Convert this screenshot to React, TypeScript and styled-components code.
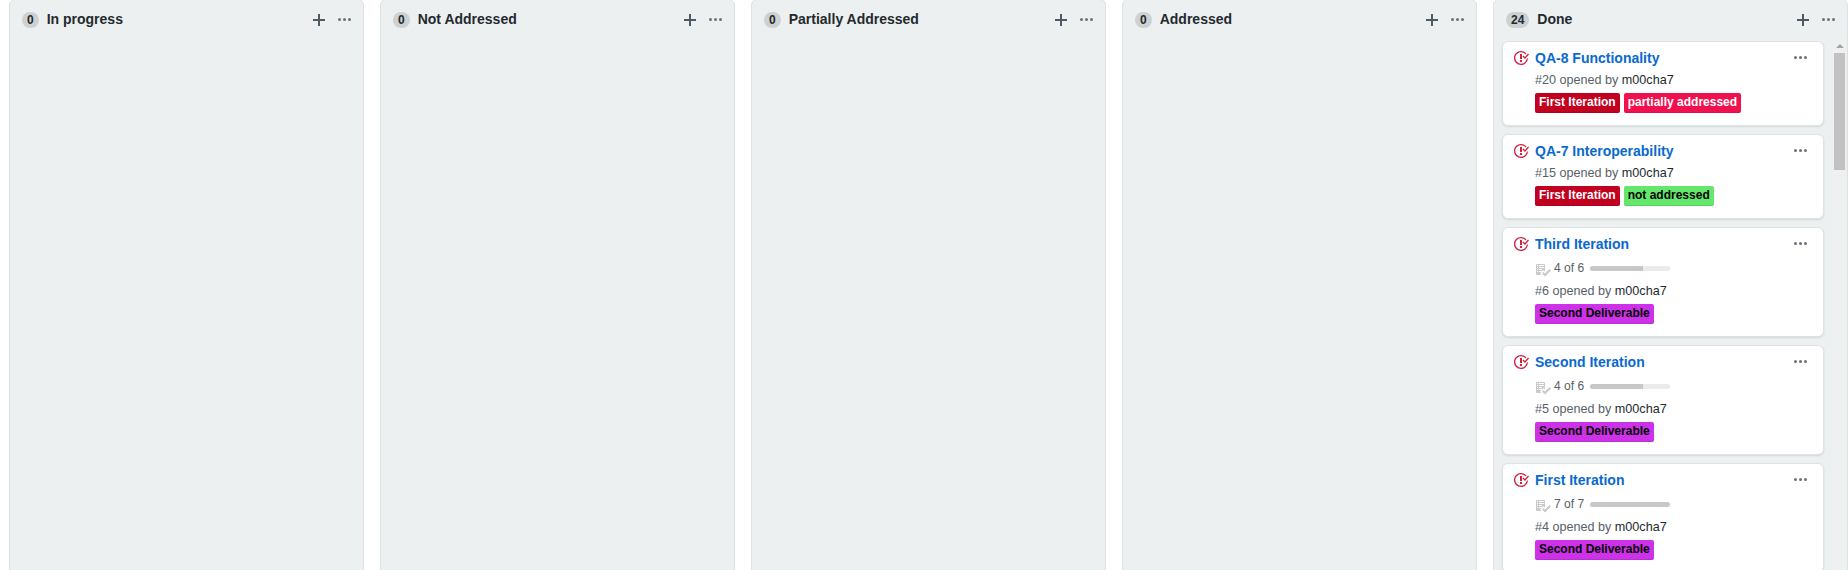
import React from "react";
import styled, { createGlobalStyle } from "styled-components";

const GlobalStyle = createGlobalStyle`
  *, *::before, *::after { box-sizing: border-box; }
  html, body { margin: 0; height: 570px; overflow: hidden; background: #fff; }
  body {
    font-family: "Liberation Sans", Arial, sans-serif;
    font-size: 14px;
    line-height: 21px;
    color: #24292e;
  }
`;

const Board = styled.main`
  display: flex;
  gap: 16px;
  width: 1848px;
  height: 570px;
  padding-left: 9px;
  overflow: hidden;
`;

const ColumnFrame = styled.section`
  display: flex;
  flex-direction: column;
  flex: 0 0 355px;
  height: 590px;
  background: #ecf0f1;
  border: 1px solid #dfe2e5;
  border-radius: 6px;
  margin-top: -1px;
`;

const ColumnHeader = styled.header`
  display: flex;
  align-items: flex-start;
  height: 41px;
  padding: 9px 12px 0;
`;

const Counter = styled.span`
  height: 16px;
  margin-top: 3px;
  padding: 0 5px;
  border-radius: 20px;
  background: #cdd1d2;
  font-size: 12px;
  font-weight: 700;
  line-height: 16px;
`;

const ColumnTitle = styled.h3`
  flex: 1;
  margin: 0 0 0 8px;
  font-size: 14px;
  font-weight: 700;
  line-height: 21px;
`;

const IconButton = styled.button<{ $gap?: number; $top?: number; $muted?: boolean }>`
  display: block;
  margin: ${({ $top = 3 }) => $top}px 0 0 ${({ $gap = 0 }) => $gap}px;
  padding: 0;
  border: 0;
  background: none;
  color: ${({ $muted }) => ($muted ? "#68727b" : "#4f5961")};
  line-height: 0;
`;

const Icon = styled.svg`
  display: block;
  fill: currentColor;
`;

const ColumnBody = styled.div`
  display: flex;
  flex: 1;
  min-height: 0;
  overflow: hidden;
`;

const CardList = styled.div`
  flex: 1;
  padding: 0 9px 0 8px;
`;

const CardFrame = styled.article`
  display: flex;
  align-items: flex-start;
  margin-bottom: 8px;
  padding: 6px 16px 12px 10px;
  background: #fff;
  border: 1px solid #dfe2e5;
  border-radius: 6px;
  box-shadow: 0 1px 2px rgba(27, 31, 35, 0.12);
`;

const ClosedIcon = styled(Icon)`
  flex: none;
  margin: 2px 6px 0 0;
  color: #d41f3f;
`;

const CardContent = styled.div`
  flex: 1;
`;

const CardTitle = styled.a`
  display: block;
  color: #0969d0;
  font-weight: 700;
  line-height: 21px;
`;

const Meta = styled.div`
  padding-top: 2px;
  color: #586069;
  font-size: 12.6px;
  line-height: 18px;
`;

const Author = styled.a`
  color: #24292e;
`;

const TaskProgress = styled.div`
  display: flex;
  align-items: center;
  height: 25px;
  color: #586069;
  font-size: 12px;
  line-height: 18px;
`;

const TaskIcon = styled(Icon)`
  margin: 5px 3px 0 0;
  color: #cacaca;
`;

const ProgressTrack = styled.span`
  display: block;
  width: 80px;
  height: 5px;
  margin: 2px 0 0 6px;
  overflow: hidden;
  border-radius: 3px;
  background: #ebebeb;
`;

const ProgressFill = styled.span`
  display: block;
  height: 100%;
  background: #c8c8c8;
`;

const Labels = styled.div`
  display: flex;
  gap: 4px;
  margin-top: 4px;
`;

const Label = styled.span<{ $bg: string; $fg: string }>`
  height: 20px;
  padding: 0 4px;
  border-radius: 2px;
  box-shadow: inset 0 -1px 0 rgba(27, 31, 35, 0.12);
  background: ${({ $bg }) => $bg};
  color: ${({ $fg }) => $fg};
  font-size: 12px;
  font-weight: 700;
  line-height: 18px;
`;

const Scrollbar = styled.div`
  display: flex;
  flex-direction: column;
  align-items: center;
  width: 13px;
  margin-right: 1px;
  background: #eff1f1;
`;

const ScrollArrow = styled.span`
  margin: 3px 0 5px;
  border: 4px solid transparent;
  border-top: 0;
  border-bottom: 4px solid #a3a3a3;
`;

const ScrollThumb = styled.span`
  width: 11px;
  height: 117px;
  background: #c1c2c1;
`;

const PlusIcon = () => (
  <Icon width="12" height="16" viewBox="0 0 12 16">
    <path d="M12 9H7v5H5V9H0V7h5V2h2v5h5v2z" />
  </Icon>
);

const KebabIcon = () => (
  <Icon width="13" height="16" viewBox="0 0 13 16">
    <path d="M1.5 9a1.5 1.5 0 100-3 1.5 1.5 0 000 3zm5 0a1.5 1.5 0 100-3 1.5 1.5 0 000 3zM13 7.5a1.5 1.5 0 11-3 0 1.5 1.5 0 013 0z" />
  </Icon>
);

interface CardData {
  title: string;
  number: number;
  tasks?: [number, number];
  labels: LabelData[];
}

interface LabelData {
  text: string;
  bg: string;
  fg: string;
}

const firstIteration: LabelData = { text: "First Iteration", bg: "#c2001f", fg: "#fff" };
const partially: LabelData = { text: "partially addressed", bg: "#f2114f", fg: "#fff" };
const notAddressed: LabelData = { text: "not addressed", bg: "#64e86b", fg: "#000" };
const secondDeliverable: LabelData = { text: "Second Deliverable", bg: "#cd32e8", fg: "#000" };

const doneCards: CardData[] = [
  { title: "QA-8 Functionality", number: 20, labels: [firstIteration, partially] },
  { title: "QA-7 Interoperability", number: 15, labels: [firstIteration, notAddressed] },
  { title: "Third Iteration", number: 6, tasks: [4, 6], labels: [secondDeliverable] },
  { title: "Second Iteration", number: 5, tasks: [4, 6], labels: [secondDeliverable] },
  { title: "First Iteration", number: 4, tasks: [7, 7], labels: [secondDeliverable] },
];

const columns: { name: string; count: number; cards?: CardData[] }[] = [
  { name: "In progress", count: 0 },
  { name: "Not Addressed", count: 0 },
  { name: "Partially Addressed", count: 0 },
  { name: "Addressed", count: 0 },
  { name: "Done", count: 24, cards: doneCards },
];

function Card({ card }: { card: CardData }) {
  return (
    <CardFrame>
      <ClosedIcon width="16" height="16" viewBox="0 0 16 16">
        <path
          fillRule="evenodd"
          d="M7 10h2v2H7v-2zm2-6H7v5h2V4zm1.5 1.5l-1 1L12 9l4-4.5-1-1L12 7l-1.5-1.5zM8 13.7A5.71 5.71 0 012.3 8c0-3.14 2.56-5.7 5.7-5.7 1.83 0 3.45.88 4.5 2.2l.92-.92A6.947 6.947 0 008 1C4.14 1 1 4.14 1 8s3.14 7 7 7 7-3.14 7-7l-1.52 1.52c-.66 2.41-2.86 4.19-5.48 4.19v-.01z"
        />
      </ClosedIcon>
      <CardContent>
        <CardTitle>{card.title}</CardTitle>
        {card.tasks && (
          <TaskProgress>
            <TaskIcon width="16" height="16" viewBox="0 0 16 16">
              <path
                fillRule="evenodd"
                d="M16 8.5l-6 6-3-3L8.5 10l1.5 1.5L14.5 7 16 8.5zM5.7 12.2l.8.8H2c-.55 0-1-.45-1-1V3c0-.55.45-1 1-1h7c.55 0 1 .45 1 1v6.5l-.8-.8c-.39-.39-1.03-.39-1.42 0L5.7 10.8a.996.996 0 000 1.41v-.01zM4 4h5V3H4v1zm0 2h5V5H4v1zm0 2h3V7H4v1zM3 9H2v1h1V9zm0-2H2v1h1V7zm0-2H2v1h1V5zm0-2H2v1h1V3zm1 7h3V9H4v1z"
              />
            </TaskIcon>
            {card.tasks[0]} of {card.tasks[1]}
            <ProgressTrack>
              <ProgressFill style={{ width: `${(card.tasks[0] / card.tasks[1]) * 100}%` }} />
            </ProgressTrack>
          </TaskProgress>
        )}
        <Meta>
          #{card.number} opened by <Author>m00cha7</Author>
        </Meta>
        <Labels>
          {card.labels.map((label) => (
            <Label key={label.text} $bg={label.bg} $fg={label.fg}>
              {label.text}
            </Label>
          ))}
        </Labels>
      </CardContent>
      <IconButton $top={2} $muted aria-label="Card menu">
        <KebabIcon />
      </IconButton>
    </CardFrame>
  );
}

export default function App() {
  return (
    <>
      <GlobalStyle />
      <Board>
        {columns.map((column) => (
          <ColumnFrame key={column.name}>
            <ColumnHeader>
              <Counter>{column.count}</Counter>
              <ColumnTitle>{column.name}</ColumnTitle>
              <IconButton aria-label="Add card">
                <PlusIcon />
              </IconButton>
              <IconButton $gap={13} $muted aria-label="Column menu">
                <KebabIcon />
              </IconButton>
            </ColumnHeader>
            {column.cards && (
              <ColumnBody>
                <CardList>
                  {column.cards.map((card) => (
                    <Card key={card.number} card={card} />
                  ))}
                </CardList>
                <Scrollbar>
                  <ScrollArrow />
                  <ScrollThumb />
                </Scrollbar>
              </ColumnBody>
            )}
          </ColumnFrame>
        ))}
      </Board>
    </>
  );
}
